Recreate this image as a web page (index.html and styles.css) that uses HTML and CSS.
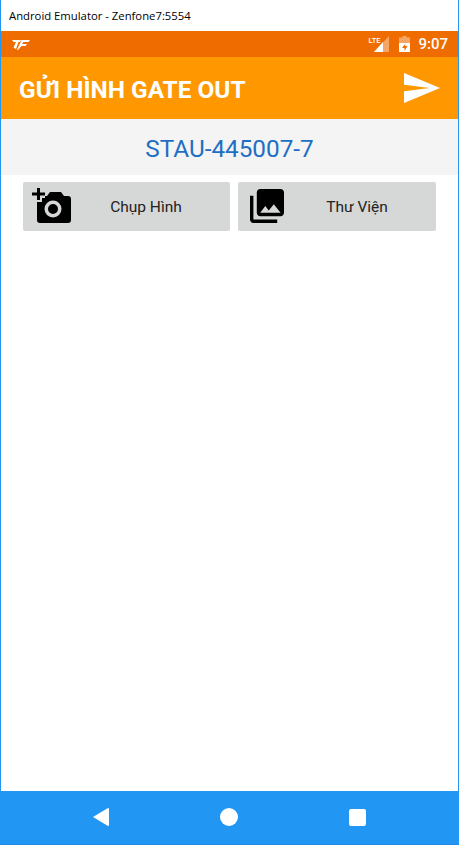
FILE: index.html
```html
<!DOCTYPE html>
<html>
<head>
    <meta charset="utf-8">
    <title>Android Emulator - Zenfone7:5554</title>
    <link rel="stylesheet" href="styles.css">
</head>
<body>
    <div class="window">
        <!-- Emulator title bar -->
        <div class="title-bar">Android Emulator - Zenfone7:5554</div>

        <div class="phone">
            <!-- Status bar -->
            <div class="status-bar">
                <svg class="status-logo" width="18" height="11" viewBox="0 0 18 11">
                    <path fill="#fff" d="M0 1h9l-1 2H6.500L4 10 1.500 8.500 4 3H1.500z"/>
                    <path fill="#fff" d="M9.500 1H18l-1.500 2h-5L10 5h5l-1.500 2H9.500L6 11H5z"/>
                </svg>
                <div class="status-right">
                    <span class="lte-label">LTE</span>
                    <svg class="signal-icon" width="15" height="16" viewBox="0 0 15 16">
                        <path fill="#fff" fill-opacity="0.4" d="M15 0v16H0z"/>
                        <path fill="#fff" d="M9 6v10H0z"/>
                    </svg>
                    <svg class="battery-icon" width="11" height="16" viewBox="0 0 11 16">
                        <path fill="#fff" fill-opacity="0.4" d="M3.500 0h4v1.500H11V7H0V1.500h3.500z"/>
                        <path fill="#fff" fill-rule="evenodd" d="M0 7h11v9H0zM6.500 7.500 3 12h2.500v3L8.500 10H6z"/>
                    </svg>
                    <span class="clock">9:07</span>
                </div>
            </div>

            <!-- App bar -->
            <div class="app-bar">
                <h1 class="app-title">GỬI HÌNH GATE OUT</h1>
                <svg class="send-icon" width="36" height="30" viewBox="2 3 21 18" preserveAspectRatio="none">
                    <path fill="#fff" d="M2.010 21 23 12 2.010 3 2 10l15 2-15 2z"/>
                </svg>
            </div>

            <div class="container-code">STAU-445007-7</div>

            <div class="actions">
                <button class="action-btn btn-camera">
                    <svg class="action-icon" width="40" height="36" viewBox="0 0 40 36">
                        <path fill="#000" fill-rule="evenodd" d="M13 8h2l3-4h11l3 4h4a3 3 0 0 1 3 3v21a3 3 0 0 1-3 3H8a3 3 0 0 1-3-3V14h5v-4h3zM12.500 21a8.500 8.500 0 1 0 17 0a8.500 8.500 0 1 0-17 0zM16 21a5 5 0 1 1 10 0a5 5 0 1 1-10 0z"/>
                        <path fill="#000" d="M5 0h3v4.500h5v3H8V12H5V7.500H0v-3h5z"/>
                    </svg>
                    <span class="action-label">Chụp Hình</span>
                </button>
                <button class="action-btn btn-library">
                    <svg class="action-icon" width="34" height="34" viewBox="2 2 20 20">
                        <path fill="#000" d="M22 16V4c0-1.100-.9-2-2-2H8c-1.100 0-2 .9-2 2v12c0 1.100.9 2 2 2h12c1.100 0 2-.9 2-2zm-11-4l2.030 2.710L16 11l4 5H8l3-4zM2 6v14c0 1.100.9 2 2 2h14v-2H4V6H2z"/>
                    </svg>
                    <span class="action-label">Thư Viện</span>
                </button>
            </div>

            <div class="content"></div>

            <!-- Navigation bar -->
            <div class="nav-bar">
                <svg width="16" height="18" viewBox="0 0 16 18"><path fill="#fff" d="M15 0a1 1 0 0 1 1 1v16a1 1 0 0 1-1 1L0 9z"/></svg>
                <div class="nav-circle"></div>
                <div class="nav-square"></div>
            </div>
        </div>
    </div>
</body>
</html>
```

FILE: styles.css
```css
html, body {
    margin: 0;
    padding: 0;
    height: 100%;
    background: #fff;
}
.window {
    display: flex;
    flex-direction: column;
    height: 845px;
    box-sizing: border-box;
    border-left: 1px solid #2196f3;
    border-right: 1px solid #2196f3;
    font-family: Roboto, sans-serif;
}
.title-bar {
    height: 31px;
    line-height: 31px;
    padding-left: 8px;
    background: #fff;
    color: #000;
    font-family: "Open Sans", sans-serif;
    font-size: 11.3px;
    white-space: nowrap;
}
.phone {
    flex: 1;
    display: flex;
    flex-direction: column;
}
.status-bar {
    height: 26px;
    display: flex;
    justify-content: space-between;
    align-items: center;
    background: #ef6c00;
    padding: 0 10px 0 11px;
}
.status-right {
    display: flex;
    align-items: center;
    color: #fff;
}
.lte-label {
    font-size: 7.5px;
    font-weight: 500;
    margin: -8px -6px 0 0;
}
.signal-icon {
    margin-right: 10px;
}
.battery-icon {
    margin-right: 8px;
}
.clock {
    font-size: 15px;
    font-weight: 500;
}
.app-bar {
    height: 62px;
    display: flex;
    justify-content: space-between;
    align-items: center;
    background: #ff9800;
    padding: 0 18px;
}
.app-title {
    margin: 3px 0 0;
    color: #fff;
    font-size: 24.4px;
    font-weight: 700;
}
.container-code {
    height: 56px;
    line-height: 60px;
    text-align: center;
    background: #f4f4f4;
    color: #1e6fc4;
    font-size: 24.3px;
}
.actions {
    display: flex;
    gap: 8px;
    padding: 7px 22px 0;
}
.action-btn {
    height: 49px;
    display: flex;
    align-items: center;
    padding: 0;
    border: none;
    border-radius: 2px;
    background: #d6d7d7;
    color: #222;
    font-family: Roboto, sans-serif;
    font-size: 15.5px;
}
.btn-camera {
    width: 207px;
}
.btn-library {
    width: 198px;
}
.action-icon {
    flex: none;
    margin-left: 9px;
}
.btn-camera .action-icon {
    margin-bottom: 1px;
}
.btn-library .action-icon {
    margin-left: 12px;
    margin-bottom: 2px;
}
.action-label {
    flex: 1;
    text-align: center;
}
.btn-camera .action-label {
    padding-right: 10px;
}
.btn-library .action-label {
    padding-right: 6px;
}
.content {
    flex: 1;
    background: #fff;
}
.nav-bar {
    height: 54px;
    box-sizing: border-box;
    padding-bottom: 1px;
    display: flex;
    align-items: center;
    justify-content: center;
    gap: 111px;
    background: #2196f3;
    border-bottom: 1px solid #1e88e5;
    margin: 0 -1px;
}
.nav-circle {
    width: 18px;
    height: 18px;
    border-radius: 50%;
    background: #fff;
}
.nav-square {
    width: 17px;
    height: 17px;
    border-radius: 2px;
    background: #fff;
}
```
